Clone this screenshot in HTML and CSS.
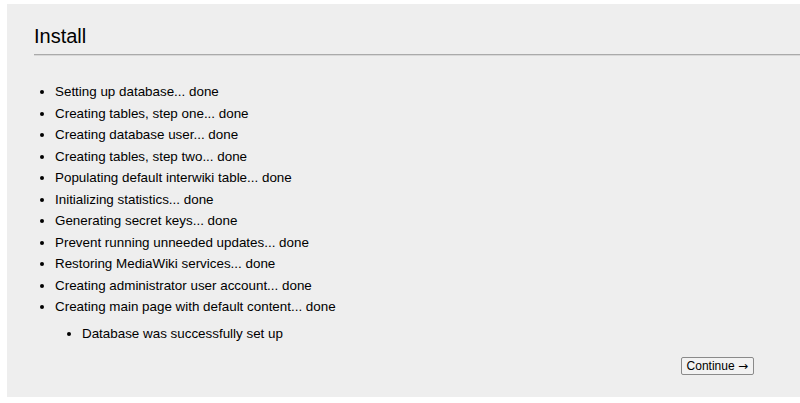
FILE: index.html
```html
<!DOCTYPE html>
<html>
<head>
<meta charset="utf-8">
<link rel="stylesheet" href="styles.css">
</head>
<body>
<div class="page">
  <div class="panel">
    <h1 class="title">Install</h1>
    <ul class="steps">
      <li>Setting up database... done</li>
      <li>Creating tables, step one... done</li>
      <li>Creating database user... done</li>
      <li>Creating tables, step two... done</li>
      <li>Populating default interwiki table... done</li>
      <li>Initializing statistics... done</li>
      <li>Generating secret keys... done</li>
      <li>Prevent running unneeded updates... done</li>
      <li>Restoring MediaWiki services... done</li>
      <li>Creating administrator user account... done</li>
      <li>Creating main page with default content... done</li>
    </ul>
    <ul class="result">
      <li>Database was successfully set up</li>
    </ul>
    <div class="actions">
      <button class="continue">Continue <span class="arrow">→</span></button>
    </div>
  </div>
</div>
</body>
</html>
```
FILE: styles.css
```css
html, body {
  margin: 0;
  padding: 0;
  background: #fff;
}
.page {
  padding: 4px 0 0 7px;
  font-family: "Liberation Sans", Arial, sans-serif;
  color: #000;
}
.panel {
  background: #eeeeee;
  height: 393px;
  padding: 0 0 0 27px;
  box-sizing: border-box;
  overflow: hidden;
}
.title {
  margin: 0;
  padding: 20px 0 6px 0;
  font-size: 20px;
  font-weight: normal;
  line-height: 24px;
  border-bottom: 1px solid #aaaaaa;
  box-shadow: 0 1px 0 #d8d8d8;
}
.steps {
  margin: 26px 0 0 0;
  padding: 0 0 0 21px;
  font-size: 13.4px;
  line-height: 21.5px;
}
.result {
  margin: 5px 0 0 0;
  padding: 0 0 0 48px;
  font-size: 13.4px;
  line-height: 21.5px;
}
.actions {
  display: flex;
  justify-content: flex-end;
  padding: 13px 46px 0 0;
}
.continue {
  font-family: "Liberation Sans", Arial, sans-serif;
  font-size: 12px;
  height: 18px;
  line-height: 16px;
  padding: 0 5px;
  background: #f2f2f2;
  border: 1px solid #8a8a8a;
  border-radius: 2px;
  color: #000;
}
.arrow {
  font-family: "DejaVu Sans", sans-serif;
  font-size: 12px;
}
```
